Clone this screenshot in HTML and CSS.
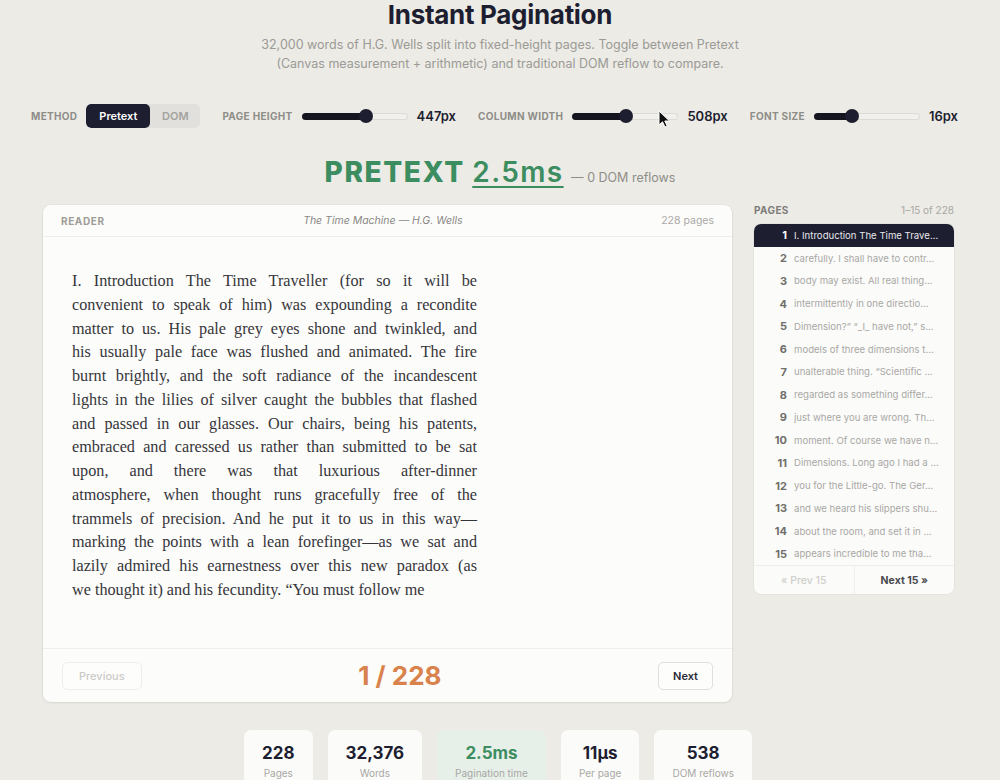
FILE: index.html
```html
<!DOCTYPE html>
<html>
<head>
<meta charset="utf-8">
<link rel="stylesheet" href="styles.css">
</head>
<body>
<div class="page">
  <h1 class="title">Instant Pagination</h1>
  <p class="subtitle">32,000 words of H.G. Wells split into fixed-height pages. Toggle between Pretext<br>(Canvas measurement + arithmetic) and traditional DOM reflow to compare.</p>

  <div class="controls">
    <div class="group">
      <span class="label">Method</span>
      <div class="segmented">
        <span class="seg active">Pretext</span>
        <span class="seg">DOM</span>
      </div>
    </div>
    <div class="group">
      <span class="label">Page height</span>
      <div class="slider"><div class="fill" style="width:61%"></div><div class="thumb"></div><div class="rest"></div></div>
      <span class="value">447px</span>
    </div>
    <div class="group">
      <span class="label">Column width</span>
      <div class="slider"><div class="fill" style="width:50.5%"></div><div class="thumb"></div><div class="rest"></div></div>
      <span class="value">508px</span>
    </div>
    <div class="group">
      <span class="label">Font size</span>
      <div class="slider"><div class="fill" style="width:35.5%"></div><div class="thumb"></div><div class="rest"></div></div>
      <span class="value">16px</span>
    </div>
  </div>

  <div class="headline">
    <span class="mode">PRETEXT</span>
    <span class="time">2.5ms</span>
    <span class="reflows">— 0 DOM reflows</span>
  </div>

  <div class="main">
    <section class="reader">
      <header class="reader-head">
        <span class="label">Reader</span>
        <span class="book">The Time Machine — H.G. Wells</span>
        <span class="count">228 pages</span>
      </header>
      <div class="reader-body">
        <div class="text">
          <span class="line">I. Introduction The Time Traveller (for so it will be</span>
          <span class="line">convenient to speak of him) was expounding a recondite</span>
          <span class="line">matter to us. His pale grey eyes shone and twinkled, and</span>
          <span class="line">his usually pale face was flushed and animated. The fire</span>
          <span class="line">burnt brightly, and the soft radiance of the incandescent</span>
          <span class="line">lights in the lilies of silver caught the bubbles that flashed</span>
          <span class="line">and passed in our glasses. Our chairs, being his patents,</span>
          <span class="line">embraced and caressed us rather than submitted to be sat</span>
          <span class="line">upon, and there was that luxurious after-dinner</span>
          <span class="line">atmosphere, when thought runs gracefully free of the</span>
          <span class="line">trammels of precision. And he put it to us in this way—</span>
          <span class="line">marking the points with a lean forefinger—as we sat and</span>
          <span class="line">lazily admired his earnestness over this new paradox (as</span>
          <span class="line last">we thought it) and his fecundity. “You must follow me</span>
        </div>
      </div>
      <footer class="reader-foot">
        <button class="btn disabled">Previous</button>
        <span class="pageno">1 / 228</span>
        <button class="btn">Next</button>
      </footer>
    </section>

    <aside class="sidebar">
      <div class="side-head">
        <span class="label">Pages</span>
        <span class="range">1–15 of 228</span>
      </div>
      <div class="pages">
        <ol class="page-list">
          <li class="row current"><span class="num">1</span><span class="snip">I. Introduction The Time Trave...</span></li>
          <li class="row"><span class="num">2</span><span class="snip">carefully. I shall have to contr...</span></li>
          <li class="row"><span class="num">3</span><span class="snip">body may exist. All real thing...</span></li>
          <li class="row"><span class="num">4</span><span class="snip">intermittently in one directio...</span></li>
          <li class="row"><span class="num">5</span><span class="snip">Dimension?” “_I_ have not,” s...</span></li>
          <li class="row"><span class="num">6</span><span class="snip">models of three dimensions t...</span></li>
          <li class="row"><span class="num">7</span><span class="snip">unalterable thing. “Scientific ...</span></li>
          <li class="row"><span class="num">8</span><span class="snip">regarded as something differ...</span></li>
          <li class="row"><span class="num">9</span><span class="snip">just where you are wrong. Th...</span></li>
          <li class="row"><span class="num">10</span><span class="snip">moment. Of course we have n...</span></li>
          <li class="row"><span class="num">11</span><span class="snip">Dimensions. Long ago I had a ...</span></li>
          <li class="row"><span class="num">12</span><span class="snip">you for the Little-go. The Ger...</span></li>
          <li class="row"><span class="num">13</span><span class="snip">and we heard his slippers shu...</span></li>
          <li class="row"><span class="num">14</span><span class="snip">about the room, and set it in ...</span></li>
          <li class="row"><span class="num">15</span><span class="snip">appears incredible to me tha...</span></li>
        </ol>
        <div class="pager">
          <span class="pg disabled">« Prev 15</span>
          <span class="pg">Next 15 »</span>
        </div>
      </div>
    </aside>
  </div>

  <div class="stats">
    <div class="stat"><span class="sv">228</span><span class="sl">Pages</span></div>
    <div class="stat"><span class="sv">32,376</span><span class="sl">Words</span></div>
    <div class="stat hl"><span class="sv">2.5ms</span><span class="sl">Pagination time</span></div>
    <div class="stat"><span class="sv">11µs</span><span class="sl">Per page</span></div>
    <div class="stat"><span class="sv">538</span><span class="sl">DOM reflows</span></div>
  </div>

  <svg class="cursor" width="13" height="18" viewBox="0 0 13 18"><path d="M1 1 L1 15 L4.5 11.8 L7 17 L9.2 16 L6.8 11 L11.5 11 Z" fill="#111" stroke="#fff" stroke-width="1"/></svg>
</div>
</body>
</html>
```

FILE: styles.css
```css
* { box-sizing: border-box; }
html, body { margin: 0; padding: 0; }
body {
  background: #ecebe6;
  font-family: Inter, "Liberation Sans", sans-serif;
  color: #1d1e30;
  overflow: hidden;
}
.page { position: relative; width: 1000px; height: 780px; }

.title {
  margin: 0;
  text-align: center;
  font-size: 26px;
  line-height: 30px;
  font-weight: 700;
  letter-spacing: -0.3px;
  color: #1d1e30;
}
.subtitle {
  margin: 5px 0 0;
  text-align: center;
  font-size: 12.5px;
  line-height: 19px;
  color: #9b9a95;
}

.controls {
  margin-top: 31px;
  display: flex;
  align-items: center;
  padding-left: 31px;
  gap: 22px;
  height: 24px;
}
.group { display: flex; align-items: center; gap: 9px; }
.label {
  font-size: 10px;
  font-weight: 700;
  letter-spacing: 0.32px;
  text-transform: uppercase;
  color: #8e8d88;
}
.segmented {
  display: flex;
  height: 24px;
  border-radius: 5px;
  background: #e1e0dc;
  overflow: hidden;
}
.seg {
  display: flex; align-items: center; justify-content: center;
  font-size: 11px; font-weight: 600;
  color: #a3a29e;
  width: 50px;
}
.seg.active { background: #1d1e30; color: #fff; width: 64px; border-radius: 5px; }

.slider {
  position: relative;
  width: 106px;
  height: 7px;
  display: flex;
  align-items: center;
}
.slider .fill { height: 7px; background: #14151f; border-radius: 4px 0 0 4px; }
.slider .rest {
  flex: 1; height: 7px;
  background: #f1f0ec;
  border: 1px solid #dcdbd6;
  border-left: none;
  border-radius: 0 4px 4px 0;
}
.slider .thumb {
  width: 14px; height: 14px; border-radius: 50%;
  background: #1d1e30;
  margin: 0 -7px;
  position: relative; z-index: 1;
}
.value { font-size: 13px; font-weight: 600; color: #1d1e30; min-width: 39px; }

.headline {
  margin-top: 27px;
  text-align: center;
  line-height: 34px;
  height: 34px;
}
.mode { font-size: 28px; font-weight: 800; color: #3c8d5f; letter-spacing: 1.6px; }
.time {
  font-size: 28px; font-weight: 600; color: #3c8d5f;
  letter-spacing: 1.4px;
  text-decoration: underline; text-decoration-thickness: 2px; text-underline-offset: 4px;
  margin-left: 3px;
}
.reflows { font-size: 12.5px; color: #8e8d88; margin-left: 3px; }

.main {
  margin-top: 16px;
  display: flex;
  gap: 22px;
  padding-left: 43px;
}
.reader {
  width: 689px;
  background: #fcfcfb;
  border-radius: 8px;
  box-shadow: 0 1px 3px rgba(0,0,0,0.07), 0 0 0 1px rgba(0,0,0,0.025);
  display: flex; flex-direction: column;
}
.reader-head {
  height: 32px;
  display: flex; align-items: center; justify-content: space-between;
  padding: 0 18px;
  border-bottom: 1px solid #efeeeb;
}
.reader-head .label { color: #9e9d98; letter-spacing: 0.6px; }
.book { font-size: 10.5px; font-style: italic; color: #8a8985; }
.count { font-size: 10.5px; color: #aaa9a5; }
.reader-body { height: 411px; padding: 33px 0 0 29px; }
.text {
  width: 405px;
  font-family: "Liberation Serif", "Times New Roman", serif;
  font-size: 16.2px;
  line-height: 23.77px;
  color: #36363a;
}
.line { display: block; text-align: justify; text-align-last: justify; white-space: nowrap; }
.line.last { text-align-last: left; }

.reader-foot {
  height: 54px;
  border-top: 1px solid #efeeeb;
  display: flex; align-items: center; justify-content: space-between;
  padding: 0 19px;
}
.btn {
  font-family: Inter, "Liberation Sans", sans-serif;
  height: 28px;
  padding: 0 14px;
  background: #fdfdfc;
  border: 1px solid #e0dfda;
  border-radius: 5px;
  font-size: 11px; font-weight: 600;
  color: #2a2b38;
}
.btn.disabled { color: #cbcac6; border-color: #efeeea; font-weight: 500; padding: 0 16px; }
.pageno { font-size: 26px; font-weight: 700; color: #d9824b; }

.sidebar { width: 200px; }
.side-head {
  height: 19px;
  display: flex; justify-content: space-between; align-items: flex-start;
}
.side-head .label { color: #7d7c78; letter-spacing: 0.4px; line-height: 11px; }
.range { font-size: 10px; color: #a8a7a3; line-height: 11px; }
.pages {
  background: #fbfbfa;
  border-radius: 7px;
  overflow: hidden;
  box-shadow: 0 0 0 1px rgba(0,0,0,0.03);
}
.page-list { list-style: none; margin: 0; padding: 0; }
.row {
  height: 22.75px;
  display: flex; align-items: center;
  padding: 0 10px 0 11px;
  gap: 7px;
}
.num { width: 22px; text-align: right; font-size: 11px; font-weight: 700; color: #6f6e6a; flex: none; }
.snip { font-size: 9.6px; color: #a9a8a4; white-space: nowrap; overflow: hidden; }
.row.current { background: #1d1e30; }
.row.current .num { color: #fff; }
.row.current .snip { color: #e8e8ec; }
.pager {
  height: 29px;
  display: flex;
  border-top: 1px solid #efeeeb;
}
.pg {
  flex: 1;
  display: flex; align-items: center; justify-content: center;
  font-size: 10.5px; font-weight: 700; color: #4a4a50;
}
.pg.disabled { color: #cfceca; font-weight: 500; border-right: 1px solid #efeeeb; }

.stats {
  margin-top: 28px;
  display: flex;
  justify-content: center;
  gap: 15px;
  padding-right: 4px;
}
.stat {
  background: #fbfbfa;
  border-radius: 7px;
  padding: 12px 18px 0;
  height: 60px;
  display: flex; flex-direction: column; align-items: center;
}
.stat.hl { background: #e7efe9; }
.sv { font-size: 17px; font-weight: 700; line-height: 22px; color: #1d1e30; }
.stat.hl .sv { color: #3c8d5f; }
.sl { font-size: 10px; line-height: 14px; margin-top: 2px; color: #a9a8a4; }

.cursor { position: absolute; left: 658px; top: 110px; }
```
